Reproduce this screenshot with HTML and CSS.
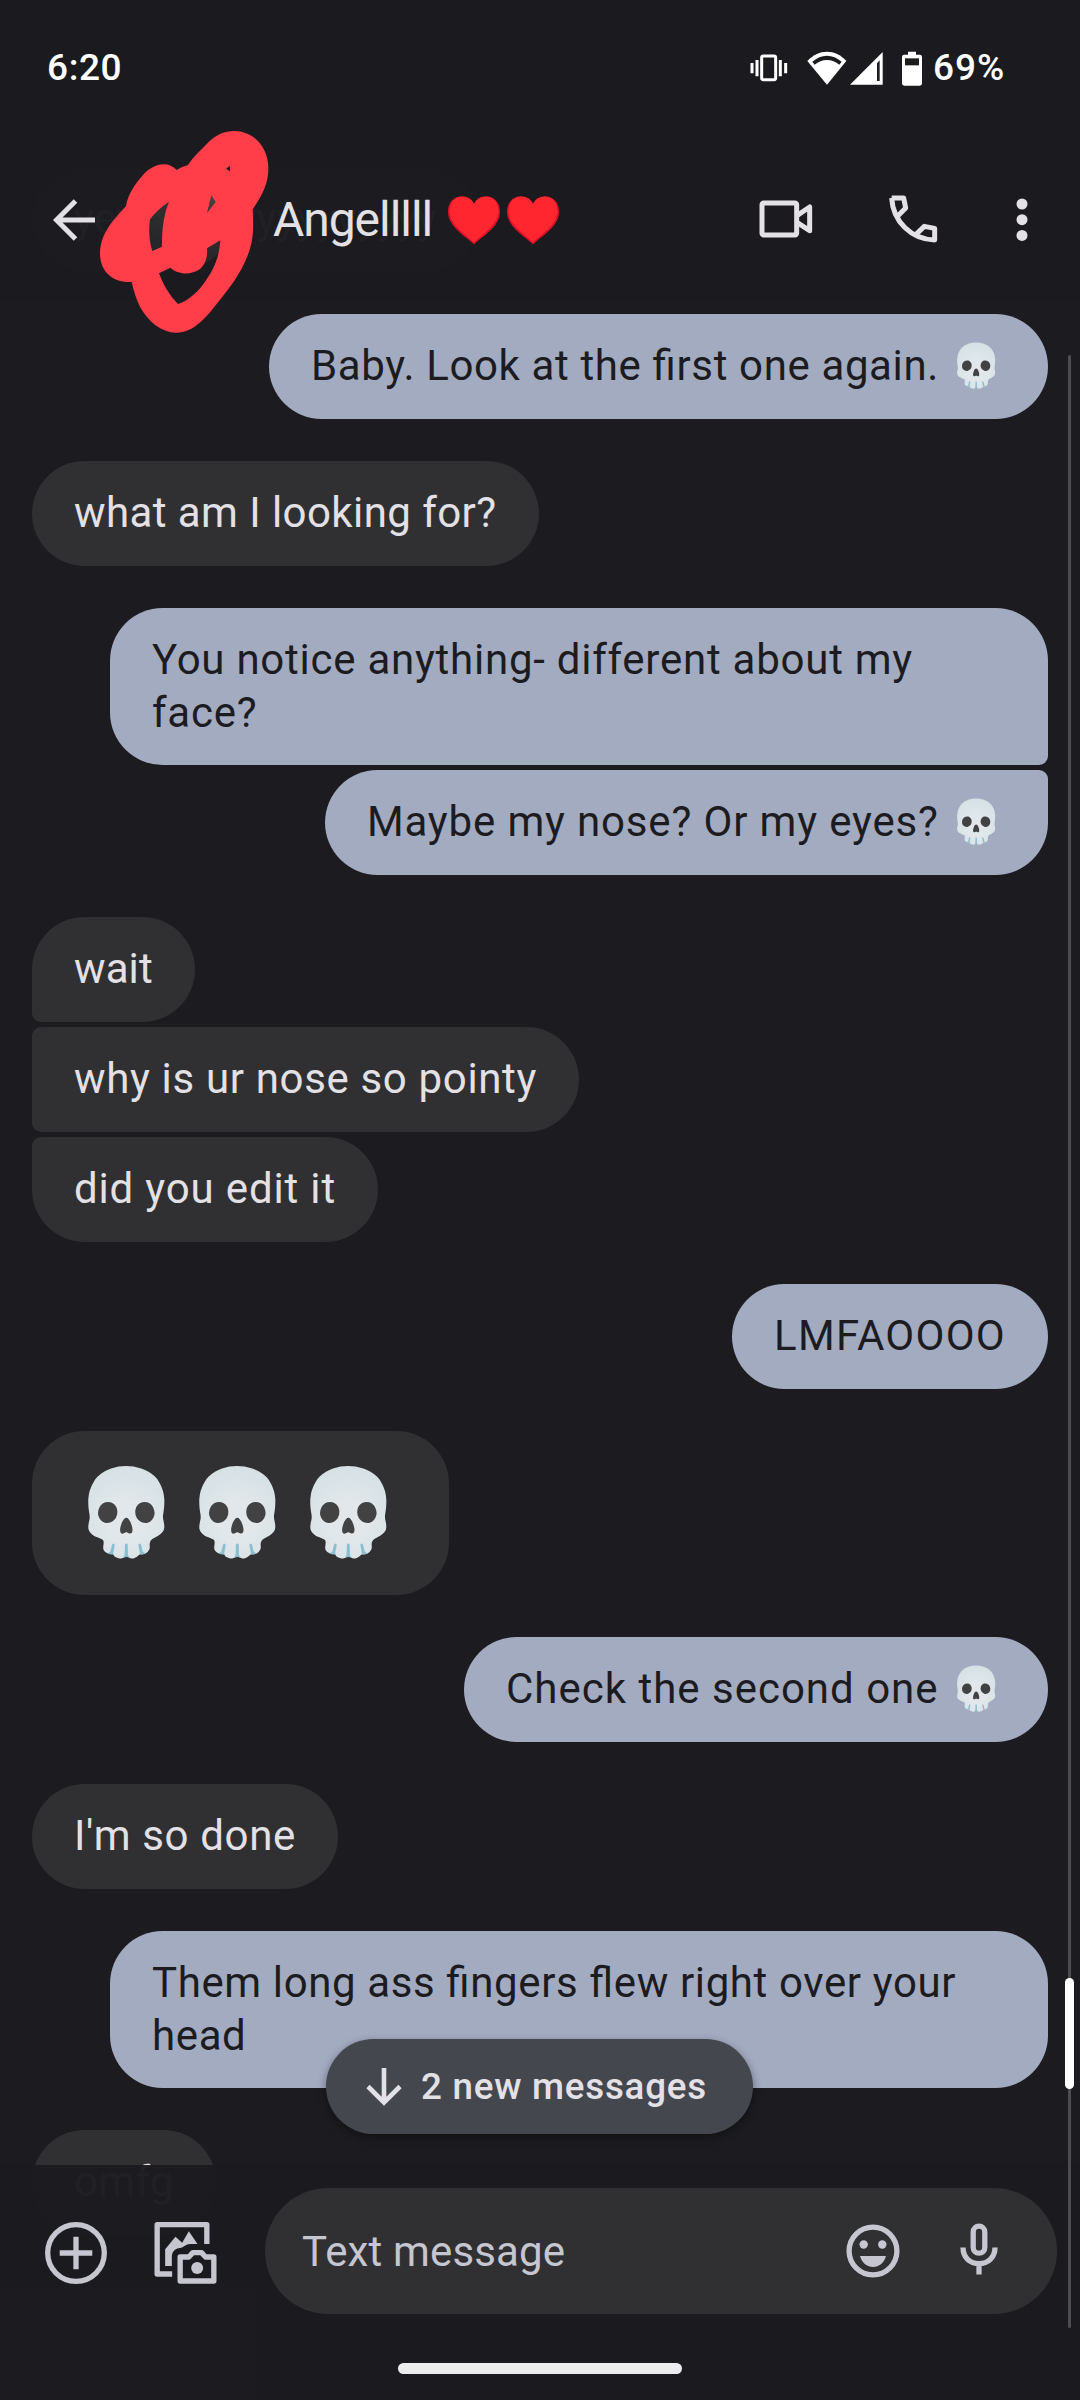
FILE: index.html
```html
<!DOCTYPE html>
<html lang="en">
<head>
<meta charset="utf-8">
<title>Messages</title>
<link rel="stylesheet" href="styles.css">
</head>
<body>
<div class="phone">
  <main class="thread">
    <div class="msg in ls-yey">yeyyyyyyyyyyyyyyyy</div>
    <div class="msg out ls-baby">Baby. Look at the first one again. <span class="emoji">💀</span></div>
    <div class="msg in ls-what">what am I looking for?</div>
    <div class="group end">
      <div class="msg out wide join-below ls-you">You notice anything- different about my<br>face?</div>
      <div class="msg out join-above ls-maybe">Maybe my nose? Or my eyes? <span class="emoji">💀</span></div>
    </div>
    <div class="group">
      <div class="msg in join-below ls-wait">wait</div>
      <div class="msg in join-above join-below ls-why">why is ur nose so pointy</div>
      <div class="msg in join-above ls-did">did you edit it</div>
    </div>
    <div class="msg out ls-lol">LMFAOOOO</div>
    <div class="msg in big">💀💀💀</div>
    <div class="msg out ls-check">Check the second one <span class="emoji">💀</span></div>
    <div class="msg in ls-done">I'm so done</div>
    <div class="msg out wide ls-them">Them long ass fingers flew right over your<br>head</div>
    <div class="msg in ls-omfg">omfg</div>
  </main>

  <header class="top">
    <div class="status">
      <span class="clock">6:20</span>
      <svg class="vibrate" width="38" height="28" viewBox="454 162 114 84" fill="none" stroke="#fff"><rect x="489" y="168" width="42" height="71" rx="5" stroke-width="9"/><path d="M475 180v49M545 180v49" stroke-width="9"/><path d="M460 189v31M561 189v31" stroke-width="9"/></svg>
      <svg class="wifi" width="40" height="34" viewBox="623 151 120 102"><path d="M683 252 624 181C642 162 662 153 683 153s41 9 58 28Z" fill="#fff"/><path d="M639 183c14-12 28-18 44-18s30 6 44 18l-7 9c-11-9-23-14-37-14s-26 5-37 14Z" fill="#1c1b1f"/></svg>
      <svg class="signal" width="33" height="34" viewBox="751 151 99 102"><path d="M751 252 849 154v98Z" fill="#fff"/><path d="M832 188 840 179v62h-8Z" fill="#1c1b1f"/></svg>
      <svg class="battery" width="20" height="35" viewBox="906 151 60 105"><path d="M924 153h24v9h11q7 0 7 7v79q0 7-7 7h-46q-7 0-7-7v-79q0-7 7-7h11Z" fill="#fff"/><path d="M915 173h42v21h-42Z" fill="#1c1b1f"/></svg>
      <span class="percent">69%</span>
    </div>
    <div class="bar">
      <svg class="back" width="42" height="42" viewBox="0 0 42 42" fill="none" stroke="#e3e1e6" stroke-width="5"><path d="M42 21H4M22.500 2 3.500 21l19 19"/></svg>
      <div class="avatar"></div>
      <h1 class="name">Angelllll</h1>
      <span class="hearts" role="img" aria-label="two red hearts">
        <svg width="52" height="49" viewBox="0 0 52 49"><path d="M26 48.500C19 41 0 31 0 16 0 6 6 .5 14 .5c6 0 10 3 12 7.500C28 3.500 32 .5 38 .5c8 0 14 5.500 14 15.500 0 15-19 25-26 32.500Z" fill="#df1029"/><path d="M26 46.500C19 39 1.500 29 1.500 15 1.500 6 7 .5 14 .5c6 0 10 3 12 7.500C28 3.500 32 .5 38 .5c7 0 12.500 5.500 12.500 14.500 0 14-17.500 24-24.500 31.500Z" fill="#ff2630"/></svg>
        <svg width="52" height="49" viewBox="0 0 52 49"><path d="M26 48.500C19 41 0 31 0 16 0 6 6 .5 14 .5c6 0 10 3 12 7.500C28 3.500 32 .5 38 .5c8 0 14 5.500 14 15.500 0 15-19 25-26 32.500Z" fill="#df1029"/><path d="M26 46.500C19 39 1.500 29 1.500 15 1.500 6 7 .5 14 .5c6 0 10 3 12 7.500C28 3.500 32 .5 38 .5c7 0 12.500 5.500 12.500 14.500 0 14-17.500 24-24.500 31.500Z" fill="#ff2630"/></svg>
      </span>
      <svg class="video" width="54" height="38" viewBox="473 599 162 114" fill="none" stroke="#e3e1e6" stroke-width="15" stroke-linejoin="round"><rect x="482" y="608" width="104" height="96" rx="5"/><path d="M588 645 625 620v71l-37-24"/></svg>
      <svg class="call" width="50" height="50" viewBox="860 580 150 150" fill="none" stroke="#e3e1e6" stroke-width="15" stroke-linejoin="round"><path d="M871 592h36l6 30-26 26M871 592c4 70 58 124 129 126v-35l-31-6-27 26"/></svg>
      <svg class="more" width="12" height="44" viewBox="0 0 12 44" fill="#e3e1e6"><circle cx="6" cy="6" r="5.500"/><circle cx="6" cy="21.700" r="5.500"/><circle cx="6" cy="37.400" r="5.500"/></svg>
    </div>
  </header>

  <svg class="scribble" width="190" height="220" viewBox="0 0 570 660"><path fill="#ff3e4a" fill-rule="evenodd" d="M432 33C490 33 535 80 535 145C535 190 520 220 488 268C492 345 488 375 465 425C440 480 405 520 380 552C345 597 310 637 259 638C205 636 170 595 150 560C138 535 130 510 125 486C75 490 31 460 30 403C31 345 60 310 108 258C115 215 145 180 165 158C195 130 235 122 260 150Q276 140 293 136C310 110 335 88 353 69C378 44 405 33 432 33ZM237 245Q200 270 180 298Q173 350 187 393L216 380Q214 300 237 245ZM364 226 377 246 351 279ZM408 146 420 138V154ZM391 361 351 385C354 410 345 435 330 447C300 468 262 462 241 443L207 460C222 500 242 530 264 552C290 545 320 520 340 492C372 450 388 410 391 361Z"/></svg>

  <div class="rail"></div>
  <div class="thumb"></div>

  <footer class="composer">
    <div class="row">
      <svg class="add" width="62" height="62" viewBox="0 0 62 62" fill="none" stroke="#c5c6d0" stroke-width="5.300"><circle cx="31" cy="31" r="28.300"/><path d="M31 14.700v32.600M14.700 31h32.600"/></svg>
      <svg class="gallery" width="63" height="62" viewBox="374 66 188 186" fill="none" stroke="#c5c6d0" stroke-width="16" stroke-linejoin="round"><path d="M532 132V74H383v148h45"/><path d="M452 243v-72h26l12-13h26l12 13h25v72Z"/><circle cx="503" cy="204" r="18" fill="#c5c6d0" stroke="none"/><path d="M407 198v-50l31-38 20 18 20-34 26 38h-22c-14 0-18 11-32 12-18 2-23 16-23 28v26Z" fill="#c5c6d0" stroke="none"/></svg>
      <div class="field">
        <span class="hint">Text message</span>
        <svg width="54" height="54" viewBox="0 0 54 54" fill="#c5c6d0"><circle cx="27" cy="27" r="23.900" fill="none" stroke="#c5c6d0" stroke-width="5.300"/><circle cx="17.700" cy="20.500" r="4.200"/><circle cx="36.300" cy="20.500" r="4.200"/><path d="M14 32h26c-2 7-7 11-13 11s-11-4-13-11Z"/></svg>
        <svg class="mic" width="38" height="52" viewBox="0 0 38 52" fill="none" stroke="#c5c6d0" stroke-width="5.300"><rect x="13.200" y="3.200" width="11.600" height="27" rx="5.800"/><path d="M3 24.500c0 10 7 16.200 16 16.200s16-6.200 16-16.200M19 40v11.500"/></svg>
      </div>
    </div>
    <div class="gesture"></div>
  </footer>

  <div class="fab">
    <svg width="36" height="38" viewBox="0 0 36 38" fill="none" stroke="#e3e1e6" stroke-width="4.600"><path d="M18 0v34M2 18.500 18 34.500l16-16"/></svg>
    <span>2 new messages</span>
  </div>
</div>
</body>
</html>
```
FILE: styles.css
```css
*{box-sizing:border-box}
body{margin:0;background:#1c1b1f;font-family:Roboto,"Liberation Sans",sans-serif}
svg{display:block;flex:none}
.phone{position:relative;width:1080px;height:2400px;overflow:hidden;background:#1c1b1f}

.thread{display:flex;flex-direction:column;align-items:flex-start;gap:42px;padding:167px 32px 0}
.group{display:flex;flex-direction:column;align-items:flex-start;gap:5px;align-self:stretch}
.group.end{align-items:flex-end}
.msg{padding:25px 42px 27px;border-radius:52.5px;font-size:42px;line-height:53px;white-space:nowrap;font-feature-settings:"liga" 1}
.in{background:#303032;color:#e3e1e6}
.out{background:#a3abc1;color:#1c1b1f;align-self:flex-end}
.wide{width:938px;padding-bottom:26px}
.in.join-below{border-bottom-left-radius:9px}
.in.join-above{border-top-left-radius:9px}
.out.join-below{border-bottom-right-radius:9px}
.out.join-above{border-top-right-radius:9px}
.emoji{display:inline-block;width:56px;height:53px;padding-right:4px;vertical-align:top;letter-spacing:0}
.big{width:417px;height:164px;padding:32px 0 32px 42px;font-size:84px;line-height:100px;letter-spacing:6.2px}

.ls-yey{letter-spacing:.2px}
.ls-baby{letter-spacing:.63px}
.ls-what{letter-spacing:.43px}
.ls-you{letter-spacing:.75px}
.ls-maybe{letter-spacing:.84px}
.ls-wait{letter-spacing:.1px}
.ls-why{letter-spacing:.66px}
.ls-did{letter-spacing:.84px}
.ls-lol{letter-spacing:1.27px}
.ls-check{letter-spacing:1px}
.ls-done{letter-spacing:.65px}
.ls-them{letter-spacing:.62px}
.ls-omfg{letter-spacing:.4px}

.top{position:absolute;inset:0 0 auto;height:300px;background:rgba(28,27,31,.975);color:#e3e1e6}
.status{display:flex;align-items:center;height:136px;padding:0 76px 0 47px;color:#fff;font-size:37px;font-weight:500;line-height:44px}
.clock{margin-right:auto;letter-spacing:.6px}
.vibrate{margin-right:1px}
.wifi{margin-left:18px}
.signal{margin-left:3px}
.battery{margin-left:19px}
.percent{width:71px;margin-left:11px;letter-spacing:1px}
.bar{display:flex;align-items:center;height:168px;padding:0 52px 0 53px}
.avatar{width:96px;height:96px;margin-left:41px;border-radius:50%;background:linear-gradient(200deg,#5a5350 10%,#353231 40%,#252629 75%)}
.name{width:160px;margin:0 0 0 41px;font-size:48px;font-weight:400;line-height:56px;letter-spacing:-1.05px}
.hearts{display:flex;gap:7px;margin-left:15px}
.video{margin:0 1px 2px auto}
.call{margin:0 1px 2px 74px}
.more{margin-left:77px}

.scribble{position:absolute;left:90px;top:120px}
.rail{position:absolute;left:1068px;top:355px;width:3px;height:1973px;border-radius:2px;background:#4d4d50;z-index:2}
.thumb{position:absolute;left:1065px;top:1978px;width:9px;height:111px;border-radius:5px;background:#fff;z-index:3}

.composer{position:absolute;inset:2165px 0 0;padding-top:23px;background:rgba(28,27,31,.975)}
.row{display:flex;align-items:center;padding:0 23px 0 45px}
.add{margin-top:4px}
.gallery{margin:4px 48px 0 47px}
.field{display:flex;flex:1;align-items:center;height:126px;padding:0 59px 0 37px;border-radius:63px;background:#303032}
.hint{margin-right:auto;color:#c5c6d0;font-size:42px;line-height:53px;letter-spacing:.15px}
.mic{margin-left:60px;margin-top:-5px}
.gesture{width:284px;height:11px;margin:49px auto 0;border-radius:6px;background:#ececec}

.fab{position:absolute;left:326px;top:2039px;display:flex;align-items:center;gap:19px;width:427px;height:95px;padding:0 0 0 40px;border-radius:48px;background:#45474e;color:#e3e1e6;font-size:36.75px;font-weight:500;line-height:44px;letter-spacing:.75px;white-space:nowrap;box-shadow:0 3px 8px rgba(0,0,0,.4)}
```
